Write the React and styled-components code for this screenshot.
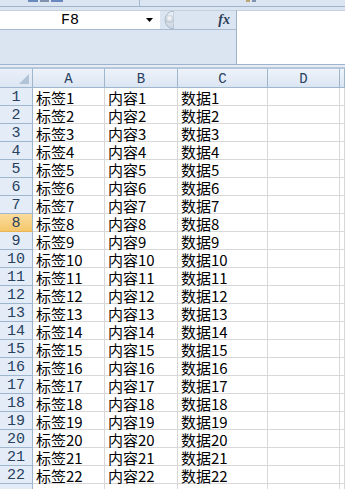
import React from "react";
import styled, { createGlobalStyle } from "styled-components";

const GlobalStyle = createGlobalStyle`
  body {
    margin: 0;
    background: #ffffff;
    font-family: "Noto Sans CJK SC", sans-serif;
    overflow: hidden;
  }
`;

const columns = [
  { name: "A", width: 72 },
  { name: "B", width: 73 },
  { name: "C", width: 90 },
  { name: "D", width: 72 },
];

const rows = Array.from({ length: 22 }, (_, i) => i + 1);
const activeRow = 8;

const Page = styled.div`
  width: 345px;
  height: 489px;
  overflow: hidden;
  background: #ffffff;
`;

const TopStrip = styled.div`
  display: flex;
  height: 6px;
  background: #dbe5f1;
  border-bottom: 1px solid #9fb3ca;
`;

const StripPart = styled.div`
  width: ${p => p.width}px;
  flex: ${p => (p.width ? "none" : 1)};
  border-right: ${p => (p.width ? "1px solid #a9bbd0" : "none")};
  padding-left: ${p => p.pad}px;
  display: flex;
  align-items: flex-start;
  gap: 2px;
`;

/* bottoms of the ribbon group captions, cut off by the window edge */
const StripMark = styled.span`
  width: ${p => p.w}px;
  height: 2px;
  background: ${p => p.color};
  opacity: 0.7;
`;

const FormulaArea = styled.div`
  display: flex;
  height: 54px;
  padding-top: 3px;
  background: #dbe5f1;
  border-bottom: 1px solid #9fb3ca;
`;

const LeftPanel = styled.div`
  width: 236px;
  display: flex;
  flex-direction: column;
  border-right: 1px solid #9fb3ca;
`;

const NameRow = styled.div`
  display: flex;
  align-items: center;
  height: 18px;
  border-top: 1px solid #c3d1e2;
  border-bottom: 1px solid #a9bbd0;
`;

const NameBox = styled.div`
  width: 160px;
  height: 100%;
  display: flex;
  align-items: center;
  background: #ffffff;
`;

const NameText = styled.div`
  width: 140px;
  text-align: center;
  font-family: "Liberation Mono", monospace;
  font-size: 15px;
  line-height: 17px;
  color: #000000;
`;

const DropArrow = styled.svg`
  width: 20px;
  height: 8px;
`;

const Knob = styled.svg`
  width: 14px;
  height: 18px;
  flex: none;
`;

const Fx = styled.div`
  margin-left: auto;
  margin-right: 6px;
  font-family: "Liberation Serif", serif;
  font-style: italic;
  font-weight: bold;
  font-size: 14px;
  line-height: 16px;
  color: #2c3e5a;
`;

const NameBelow = styled.div`
  flex: 1;
  background: #dbe5f1;
`;

const FormulaInput = styled.div`
  flex: 1;
  background: #ffffff;
  border-top: 1px solid #c3d1e2;
`;

const Gap = styled.div`
  height: 2px;
  background: #e6edf6;
  border-bottom: 1px solid #b7c7da;
`;

const Sheet = styled.div`
  display: grid;
  grid-template-columns: 33px ${columns.map(c => `${c.width}px`).join(" ")} 1fr;
  grid-template-rows: 20px;
  grid-auto-rows: 18px;
  background: #ffffff;
`;

const Corner = styled.div`
  position: relative;
  background: linear-gradient(#e9eff8, #dce6f3);
  border-right: 1px solid #9eb6ce;
  border-bottom: 1px solid #9eb6ce;
  border-top: 1px solid #b9c9dc;
  box-sizing: border-box;
`;

const CornerMark = styled.div`
  position: absolute;
  right: 3px;
  bottom: 3px;
  width: 0;
  height: 0;
  border-left: 10px solid transparent;
  border-bottom: 10px solid #b3c3d7;
`;

const ColHead = styled.div`
  box-sizing: border-box;
  display: flex;
  align-items: center;
  justify-content: center;
  padding-top: 1px;
  background: linear-gradient(#eef3fa, #dbe5f2);
  border-right: 1px solid #9eb6ce;
  border-bottom: 1px solid #9eb6ce;
  border-top: 1px solid #b9c9dc;
  font-family: "Liberation Mono", monospace;
  font-size: 14px;
  line-height: 16px;
  color: #27415f;
`;

const RowHead = styled.div`
  box-sizing: border-box;
  display: flex;
  align-items: center;
  justify-content: center;
  padding-top: 2px;
  background: ${p =>
    p.active ? "linear-gradient(#fbdc9c, #f5c76c)" : "#e4ecf7"};
  border-right: 1px solid #9eb6ce;
  border-bottom: 1px solid ${p => (p.active ? "#e8b456" : "#9eb6ce")};
  font-family: "Liberation Mono", monospace;
  font-size: 15px;
  line-height: 15px;
  color: #27415f;
`;

const Cell = styled.div`
  box-sizing: border-box;
  display: flex;
  align-items: center;
  padding: 2px 0 0 3px;
  border-right: 1px solid #d8d8d8;
  border-bottom: 1px solid #d8d8d8;
  font-size: 15px;
  line-height: 15px;
  color: #000000;
  white-space: nowrap;
`;

const cellText = (col, r) => {
  if (col === "A") return `标签${r}`;
  if (col === "B") return `内容${r}`;
  if (col === "C") return `数据${r}`;
  return "";
};

const App = () => {
  return (
    <Page>
      <GlobalStyle />
      <TopStrip>
        <StripPart width={111} pad={28}>
          <StripMark w={10} color="#3b63a8" />
          <StripMark w={9} color="#5b6f8f" />
          <StripMark w={12} color="#3b63a8" />
        </StripPart>
        <StripPart pad={106}>
          <StripMark w={4} color="#b08a3a" />
          <StripMark w={4} color="#5b6f8f" />
        </StripPart>
      </TopStrip>
      <FormulaArea>
        <LeftPanel>
          <NameRow>
            <NameBox>
              <NameText>F8</NameText>
              <DropArrow viewBox="0 0 20 8">
                <path d="M6 2 H13 L9.5 6 Z" fill="#000" />
              </DropArrow>
            </NameBox>
            <Knob viewBox="0 0 14 18">
              <defs>
                <linearGradient id="knob" x1="0" y1="0" x2="0" y2="1">
                  <stop offset="0" stopColor="#eef2f7" />
                  <stop offset="1" stopColor="#c9d4e2" />
                </linearGradient>
                <radialGradient id="dot" cx="0.5" cy="0.4" r="0.6">
                  <stop offset="0" stopColor="#ffffff" />
                  <stop offset="1" stopColor="#b8c2cf" />
                </radialGradient>
              </defs>
              <path
                d="M14 0 A9 9 0 0 0 14 18 Z"
                fill="url(#knob)"
                stroke="#a9b7c8"
                strokeWidth="1"
              />
              <circle cx="9.5" cy="8" r="4" fill="url(#dot)" />
            </Knob>
            <Fx>fx</Fx>
          </NameRow>
          <NameBelow />
        </LeftPanel>
        <FormulaInput />
      </FormulaArea>
      <Gap />
      <Sheet>
        <Corner>
          <CornerMark />
        </Corner>
        {columns.map(c => (
          <ColHead key={c.name}>{c.name}</ColHead>
        ))}
        <ColHead />
        {rows.map(r => (
          <React.Fragment key={r}>
            <RowHead active={r === activeRow}>{r}</RowHead>
            {columns.map(c => (
              <Cell key={c.name}>{cellText(c.name, r)}</Cell>
            ))}
            <Cell />
          </React.Fragment>
        ))}
        <RowHead />
        {columns.map(c => (
          <Cell key={c.name} />
        ))}
        <Cell />
      </Sheet>
    </Page>
  );
};

export default App;
